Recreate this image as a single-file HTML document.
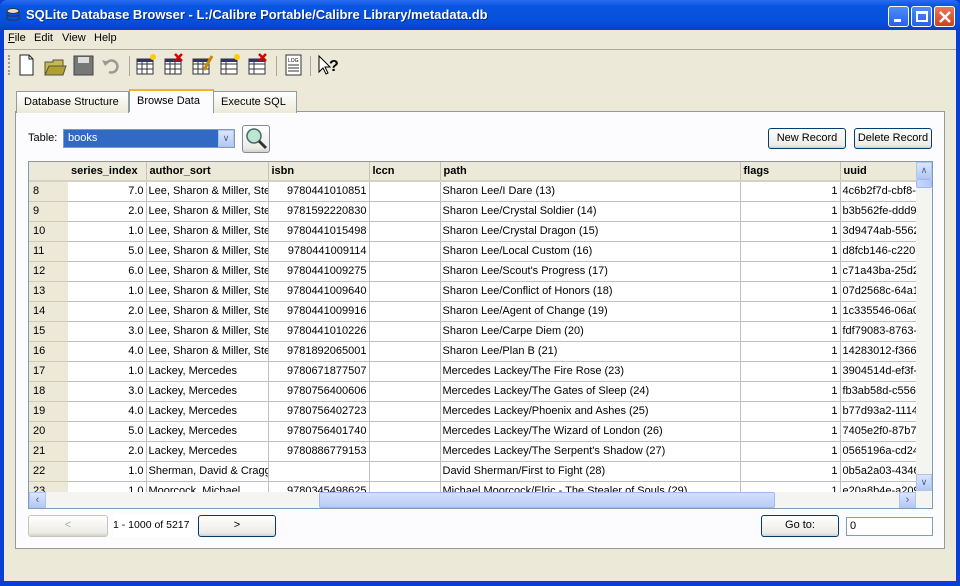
<!DOCTYPE html>
<html><head><meta charset="utf-8"><style>
*{box-sizing:border-box;margin:0;padding:0}
body{width:960px;height:586px;overflow:hidden;background:#0a3fd6;font:11px "Liberation Sans",sans-serif;color:#000;position:relative}
.a{position:absolute}
#title{left:0;top:0;width:960px;height:30px;background:linear-gradient(#2a6cf0,#0a55e0 20%,#0550dc 70%,#0740c8);border-radius:7px 7px 0 0}
#title span{position:absolute;left:26px;top:7px;color:#fff;font-weight:bold;font-size:13px;text-shadow:1px 1px #0a2a80}
.wb{top:6px;width:21px;height:21px;border:1px solid #fff;border-radius:3px;background:linear-gradient(#4f8cf8,#2660e8)}
#client{left:4px;top:30px;width:952px;height:551px;background:#ece9d8}
.tab{top:90px;height:22px;border:1px solid #919b9c;border-bottom:none;background:linear-gradient(#fff,#ece9d8);padding:4px 7px;font-size:11px;white-space:nowrap}
#panel{left:15px;top:111px;width:930px;height:438px;border:1px solid #919b9c;background:#fcfcfe}
.btn{border:1px solid #003c74;border-radius:3px;background:linear-gradient(#fff,#ecebe6 85%,#d6d0c5);text-align:center;line-height:19px;white-space:nowrap}
#grid{left:28px;top:161px;width:905px;height:348px;border:1px solid #7f9db9;background:#fff;overflow:hidden}
table{border-collapse:collapse;table-layout:fixed;position:absolute;left:0;top:0;width:891px}
td{height:20px;border-right:1px solid #c0c0c0;border-bottom:1px solid #c0c0c0;white-space:nowrap;overflow:hidden;text-overflow:clip;padding:0 2px;font-size:11px}
th{height:19px;background:#ece9d8;border-right:1px solid #c8c4b0;border-bottom:2px solid #d6d2c2;text-align:left;padding:0 3px;font-weight:bold;font-size:11px;white-space:nowrap;overflow:hidden}
td.rn{background:#ece9d8;border-right:none;border-bottom:1px solid #d0ccb8;padding-left:4px}
.r{text-align:right}
</style></head><body>
<div id="title" class="a"><svg class="a" style="left:6px;top:8px" width="14" height="14"><ellipse cx="7" cy="3" rx="6" ry="2.5" fill="#ddd" stroke="#333"/><path d="M1 3v8c0 1.5 12 1.5 12 0V3M1 7c0 1.5 12 1.5 12 0" fill="none" stroke="#333"/></svg><span>SQLite Database Browser - L:/Calibre Portable/Calibre Library/metadata.db</span>
<div class="a wb" style="left:888px"><div class="a" style="left:5px;top:12px;width:7px;height:3px;background:#fff"></div></div>
<div class="a wb" style="left:911px"><div class="a" style="left:4px;top:4px;width:12px;height:11px;border:2px solid #fff;border-top-width:3px"></div></div>
<div class="a wb" style="left:934px;background:linear-gradient(#e8785a,#d0401c)"><svg class="a" style="left:3px;top:3px" width="14" height="14"><path d="M2 2L12 12M12 2L2 12" stroke="#fff" stroke-width="2.4"/></svg></div>
</div>
<div id="client" class="a"></div>
<div class="a" style="left:8px;top:32px"><u>F</u>ile</div>
<div class="a" style="left:34px;top:32px">Edit</div>
<div class="a" style="left:62px;top:32px">View</div>
<div class="a" style="left:94px;top:32px">Help</div>
<div class="a" style="left:4px;top:49px;width:952px;height:1px;background:#aca899"></div>
<div class="a" style="left:8px;top:55px;width:3px;height:20px;border-left:2px dotted #999"></div>
<svg class="a" style="left:16px;top:52px" width="330" height="26">
<path d="M4 3h9l4 4v16H4z" fill="#fff" stroke="#222"/><path d="M13 3v4h4" fill="none" stroke="#222"/>
<path d="M29 10h8v-2h10v15H29z" fill="#c8b850" stroke="#554"/><path d="M29 23l4-9h17l-3 9z" fill="#b0a030" stroke="#554"/>
<rect x="58" y="4" width="19" height="19" fill="#777" stroke="#444"/><rect x="62" y="5" width="11" height="6" fill="#ddd"/>
<path d="M90 12a6 6 0 1 1 3 8" fill="none" stroke="#999" stroke-width="2.5"/><path d="M86 8l3 6 4-4z" fill="#999"/>
<g fill="#fff" stroke="#333"><rect x="121" y="7" width="16" height="15"/><rect x="149" y="7" width="16" height="15"/><rect x="177" y="7" width="16" height="15"/><rect x="205" y="7" width="16" height="15"/><rect x="233" y="7" width="16" height="15"/></g>
<g stroke="#333"><path d="M121 12h16M121 17h16M126 7v15M131 7v15M149 12h16M149 17h16M154 7v15M159 7v15M177 12h16M177 17h16M182 7v15M187 7v15M205 12h16M205 17h16M210 7v15M233 12h16M233 17h16M238 7v15"/></g>
<rect x="121" y="7" width="16" height="3" fill="#336"/><rect x="149" y="7" width="16" height="3" fill="#336"/><rect x="177" y="7" width="16" height="3" fill="#336"/><rect x="205" y="7" width="16" height="3" fill="#336"/><rect x="233" y="7" width="16" height="3" fill="#336"/>
<circle cx="137" cy="5" r="3" fill="#fc0"/><circle cx="221" cy="5" r="3" fill="#fc0"/>
<path d="M159 2l7 7M166 2l-7 7M243 2l7 7M250 2l-7 7" stroke="#d00" stroke-width="2.5"/>
<path d="M188 18l8-14" stroke="#c80" stroke-width="3"/>
<rect x="270" y="3" width="15" height="20" fill="#fff" stroke="#333"/><text x="272" y="10" font-size="5" font-family="Liberation Sans">LOG</text><path d="M272 13h11M272 16h11M272 19h11" stroke="#333"/>
<path d="M303 4v16l4-4 3 6 2-1-3-6h5z" fill="#fff" stroke="#000"/><text x="313" y="19" font-size="16" font-weight="bold" font-family="Liberation Sans">?</text>
</svg>
<div class="a" style="left:129px;top:56px;width:1px;height:20px;background:#aca899"></div>
<div class="a" style="left:276px;top:56px;width:1px;height:20px;background:#aca899"></div>
<div class="a" style="left:310px;top:56px;width:1px;height:20px;background:#aca899"></div>
<div id="panel" class="a"></div>
<div class="a tab" style="left:16px;top:91px;width:113px">Database Structure</div>
<div class="a tab" style="left:129px;top:89px;width:85px;height:23px;background:#fcfcfe;border-top:2px solid #f8b030;border-bottom:none">Browse Data</div>
<div class="a tab" style="left:213px;top:91px;width:84px">Execute SQL</div>
<div class="a" style="left:28px;top:132px">Table:</div>
<div class="a" style="left:63px;top:129px;width:172px;height:19px;border:1px solid #7f9db9;background:#316ac5;color:#fff;padding:2px 4px">books</div>
<div class="a" style="left:218px;top:130px;width:16px;height:17px;background:linear-gradient(#dbe6fc,#b4c8f4);border:1px solid #b0c4f0;color:#4d6185;text-align:center;font-size:9px;line-height:15px">&#8744;</div>
<div class="a btn" style="left:242px;top:125px;width:28px;height:28px;border-color:#7f8c9c"><svg width="24" height="24"><circle cx="10" cy="10" r="7" fill="#bde6d0" stroke="#4a6a6a" stroke-width="1.5"/><path d="M15 15l7 7" stroke="#333" stroke-width="3"/></svg></div>
<div class="a btn" style="left:768px;top:128px;width:78px;height:21px">New Record</div>
<div class="a btn" style="left:854px;top:128px;width:78px;height:21px">Delete Record</div>
<div id="grid" class="a">
<table><colgroup><col style="width:39px"><col style="width:78px"><col style="width:122px"><col style="width:101px"><col style="width:71px"><col style="width:300px"><col style="width:100px"><col style="width:80px"></colgroup>
<tr><th style="border-right:none"></th><th>series_index</th><th>author_sort</th><th>isbn</th><th>lccn</th><th>path</th><th>flags</th><th>uuid</th></tr>
<tr><td class="rn">8</td><td class="r">7.0</td><td>Lee, Sharon &amp; Miller, Steve</td><td class="r">9780441010851</td><td></td><td>Sharon Lee/I Dare (13)</td><td class="r">1</td><td>4c6b2f7d-cbf8-</td></tr>
<tr><td class="rn">9</td><td class="r">2.0</td><td>Lee, Sharon &amp; Miller, Steve</td><td class="r">9781592220830</td><td></td><td>Sharon Lee/Crystal Soldier (14)</td><td class="r">1</td><td>b3b562fe-ddd9</td></tr>
<tr><td class="rn">10</td><td class="r">1.0</td><td>Lee, Sharon &amp; Miller, Steve</td><td class="r">9780441015498</td><td></td><td>Sharon Lee/Crystal Dragon (15)</td><td class="r">1</td><td>3d9474ab-5562</td></tr>
<tr><td class="rn">11</td><td class="r">5.0</td><td>Lee, Sharon &amp; Miller, Steve</td><td class="r">9780441009114</td><td></td><td>Sharon Lee/Local Custom (16)</td><td class="r">1</td><td>d8fcb146-c220</td></tr>
<tr><td class="rn">12</td><td class="r">6.0</td><td>Lee, Sharon &amp; Miller, Steve</td><td class="r">9780441009275</td><td></td><td>Sharon Lee/Scout's Progress (17)</td><td class="r">1</td><td>c71a43ba-25d2</td></tr>
<tr><td class="rn">13</td><td class="r">1.0</td><td>Lee, Sharon &amp; Miller, Steve</td><td class="r">9780441009640</td><td></td><td>Sharon Lee/Conflict of Honors (18)</td><td class="r">1</td><td>07d2568c-64a1</td></tr>
<tr><td class="rn">14</td><td class="r">2.0</td><td>Lee, Sharon &amp; Miller, Steve</td><td class="r">9780441009916</td><td></td><td>Sharon Lee/Agent of Change (19)</td><td class="r">1</td><td>1c335546-06a0</td></tr>
<tr><td class="rn">15</td><td class="r">3.0</td><td>Lee, Sharon &amp; Miller, Steve</td><td class="r">9780441010226</td><td></td><td>Sharon Lee/Carpe Diem (20)</td><td class="r">1</td><td>fdf79083-8763-</td></tr>
<tr><td class="rn">16</td><td class="r">4.0</td><td>Lee, Sharon &amp; Miller, Steve</td><td class="r">9781892065001</td><td></td><td>Sharon Lee/Plan B (21)</td><td class="r">1</td><td>14283012-f366</td></tr>
<tr><td class="rn">17</td><td class="r">1.0</td><td>Lackey, Mercedes</td><td class="r">9780671877507</td><td></td><td>Mercedes Lackey/The Fire Rose (23)</td><td class="r">1</td><td>3904514d-ef3f-</td></tr>
<tr><td class="rn">18</td><td class="r">3.0</td><td>Lackey, Mercedes</td><td class="r">9780756400606</td><td></td><td>Mercedes Lackey/The Gates of Sleep (24)</td><td class="r">1</td><td>fb3ab58d-c556</td></tr>
<tr><td class="rn">19</td><td class="r">4.0</td><td>Lackey, Mercedes</td><td class="r">9780756402723</td><td></td><td>Mercedes Lackey/Phoenix and Ashes (25)</td><td class="r">1</td><td>b77d93a2-1114</td></tr>
<tr><td class="rn">20</td><td class="r">5.0</td><td>Lackey, Mercedes</td><td class="r">9780756401740</td><td></td><td>Mercedes Lackey/The Wizard of London (26)</td><td class="r">1</td><td>7405e2f0-87b7</td></tr>
<tr><td class="rn">21</td><td class="r">2.0</td><td>Lackey, Mercedes</td><td class="r">9780886779153</td><td></td><td>Mercedes Lackey/The Serpent's Shadow (27)</td><td class="r">1</td><td>0565196a-cd24</td></tr>
<tr><td class="rn">22</td><td class="r">1.0</td><td>Sherman, David &amp; Cragg, Dan</td><td class="r"></td><td></td><td>David Sherman/First to Fight (28)</td><td class="r">1</td><td>0b5a2a03-4346</td></tr>
<tr><td class="rn">23</td><td class="r">1.0</td><td>Moorcock, Michael</td><td class="r">9780345498625</td><td></td><td>Michael Moorcock/Elric - The Stealer of Souls (29)</td><td class="r">1</td><td>e20a8b4e-a209</td></tr>
</table>
<div class="a" style="left:887px;top:0;width:16px;height:330px;background:#f4f4f0"></div>
<div class="a" style="left:887px;top:0;width:16px;height:17px;background:linear-gradient(#dbe6fc,#b4c8f4);border:1px solid #b0c4f0;color:#4d6185;font-size:9px;text-align:center;line-height:15px">&#8743;</div>
<div class="a" style="left:887px;top:17px;width:16px;height:9px;background:linear-gradient(90deg,#c8d8fc,#b4c8f4);border:1px solid #a0b8f0;border-radius:2px"></div>
<div class="a" style="left:887px;top:312px;width:16px;height:17px;background:linear-gradient(#dbe6fc,#b4c8f4);border:1px solid #b0c4f0;color:#4d6185;font-size:9px;text-align:center;line-height:15px">&#8744;</div>
<div class="a" style="left:0;top:330px;width:903px;height:16px;background:#f4f4f0"></div>
<div class="a" style="left:0;top:330px;width:17px;height:16px;background:linear-gradient(#dbe6fc,#b4c8f4);border:1px solid #b0c4f0;color:#4d6185;text-align:center;line-height:14px">&#8249;</div>
<div class="a" style="left:290px;top:330px;width:456px;height:16px;background:linear-gradient(#d4e0fc,#b8ccf6);border:1px solid #a0b8f0;border-radius:2px"></div>
<div class="a" style="left:870px;top:330px;width:17px;height:16px;background:linear-gradient(#dbe6fc,#b4c8f4);border:1px solid #b0c4f0;color:#4d6185;text-align:center;line-height:14px">&#8250;</div>
</div>
<div class="a btn" style="left:28px;top:515px;width:80px;height:22px;border-color:#c9c7ba;color:#aca899">&lt;</div>
<div class="a" style="left:113px;top:515px;width:80px;height:22px;background:#fff;line-height:20px;white-space:nowrap;font-size:10.5px">1 - 1000 of 5217</div>
<div class="a btn" style="left:198px;top:515px;width:78px;height:22px">&gt;</div>
<div class="a btn" style="left:761px;top:515px;width:78px;height:22px">Go to:</div>
<div class="a" style="left:846px;top:517px;width:87px;height:19px;border:1px solid #7f9db9;background:#fff;padding:2px 3px">0</div>
</body></html>
